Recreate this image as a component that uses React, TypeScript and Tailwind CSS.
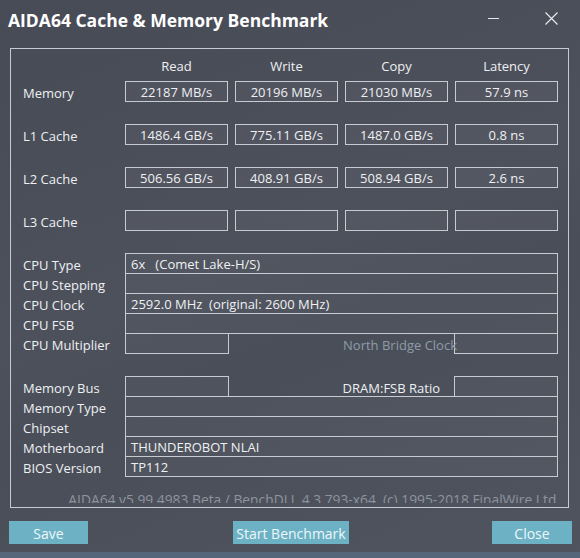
import React from 'react';

const benchRows = [
  {label: 'Memory', values: ['22187 MB/s', '20196 MB/s', '21030 MB/s', '57.9 ns']},
  {label: 'L1 Cache', values: ['1486.4 GB/s', '775.11 GB/s', '1487.0 GB/s', '0.8 ns']},
  {label: 'L2 Cache', values: ['506.56 GB/s', '408.91 GB/s', '508.94 GB/s', '2.6 ns']},
  {label: 'L3 Cache', values: ['', '', '', '']},
];

const headers = ['Read', 'Write', 'Copy', 'Latency'];

function Label({children}: {children: React.ReactNode}) {
  return <div className="h-[20px] pt-[2px] leading-[20px] whitespace-nowrap">{children}</div>;
}

function FullRow({value, last}: {value?: string; last?: boolean}) {
  return (
    <div
      className={`border-x border-t border-[#c6cad1] bg-white/[0.03] pl-[5px] pt-[1px] leading-[19px] whitespace-pre ${
        last ? 'h-[21px] border-b' : 'h-[20px]'
      }`}
    >
      {value}
    </div>
  );
}

function Button({children, className}: {children: React.ReactNode; className: string}) {
  return (
    <div className={`h-[23px] bg-[#6cb2c4] text-center text-[#eef7fa] ${className}`}>
      <div className="h-[18px] overflow-hidden pt-[3px] text-[14px] leading-[20px]">{children}</div>
    </div>
  );
}

export default function App() {
  return (
    <div className="relative flex h-[558px] w-[580px] flex-col overflow-hidden bg-[linear-gradient(160deg,#474b56_0%,#4d515c_45%,#4a4e59_60%,#50545f_100%)] font-['Segoe_UI','Open_Sans',sans-serif] text-[13px] text-[#eef0f2]">
      {/* title bar */}
      <div className="relative flex h-[48px] items-start">
        <div className="pl-[8px] pt-[7px] text-[17.5px] font-bold leading-[26px] text-white">
          AIDA64 Cache &amp; Memory Benchmark
        </div>
        <div className="absolute left-[488px] top-[18px] h-px w-[11px] bg-[#e6e8ec]" />
        <svg className="absolute left-[545px] top-[12px]" width="13" height="13" viewBox="0 0 13 13">
          <path d="M0.5 0.5L12.5 12.5M12.5 0.5L0.5 12.5" stroke="#eceef1" strokeWidth="1.1" />
        </svg>
      </div>

      {/* main panel */}
      <div className="ml-[10px] flex h-[460px] w-[559px] flex-col border border-[#c6cad1] pl-[12px]">
        {/* header */}
        <div className="mt-[7px] flex h-[20px] leading-[20px]">
          <div className="w-[102px]" />
          <div className="flex gap-[7px]">
            {headers.map((h) => (
              <div key={h} className="w-[103px] text-center">
                {h}
              </div>
            ))}
          </div>
        </div>

        {benchRows.map((row, i) => (
          <div key={row.label} className={`flex h-[21px] ${i === 0 ? 'mt-[5px]' : 'mt-[22px]'}`}>
            <div className="h-[21px] w-[102px] pt-[2px] leading-[20px]">{row.label}</div>
            <div className="flex gap-[7px]">
              {row.values.map((v, j) => (
                <div
                  key={j}
                  className="h-[21px] w-[103px] overflow-hidden border border-[#c6cad1] bg-white/[0.04] pt-[1px] text-center leading-[19px]"
                >
                  {v}
                </div>
              ))}
            </div>
          </div>
        ))}

        {/* cpu section */}
        <div className="mt-[22px] flex">
          <div className="w-[102px]">
            <Label>CPU Type</Label>
            <Label>CPU Stepping</Label>
            <Label>CPU Clock</Label>
            <Label>CPU FSB</Label>
            <Label>CPU Multiplier</Label>
          </div>
          <div className="w-[433px]">
            <FullRow value="6x   (Comet Lake-H/S)" />
            <FullRow />
            <FullRow value="2592.0 MHz  (original: 2600 MHz)" />
            <FullRow last />
            <div className="flex h-[20px]">
              <div className="w-[104px] border-x border-b border-[#c6cad1] bg-white/[0.03]" />
              <div className="relative z-10 -mr-[3px] flex-1 pt-[1px] text-right leading-[20px] text-[#8d9ca7]">
                North Bridge Clock
              </div>
              <div className="w-[104px] border-x border-b border-[#c6cad1] bg-white/[0.03]" />
            </div>
          </div>
        </div>

        {/* memory section */}
        <div className="mt-[22px] flex">
          <div className="w-[102px]">
            <Label>Memory Bus</Label>
            <Label>Memory Type</Label>
            <Label>Chipset</Label>
            <Label>Motherboard</Label>
            <Label>BIOS Version</Label>
          </div>
          <div className="w-[433px]">
            <div className="flex h-[20px]">
              <div className="w-[104px] border-x border-t border-[#c6cad1] bg-white/[0.03]" />
              <div className="flex-1 pr-[14px] pt-[2px] text-right leading-[20px]">DRAM:FSB Ratio</div>
              <div className="w-[104px] border-x border-t border-[#c6cad1] bg-white/[0.03]" />
            </div>
            <FullRow />
            <FullRow />
            <FullRow value="THUNDEROBOT NLAI" />
            <FullRow value="TP112" last />
          </div>
        </div>

        {/* footer */}
        <div className="mt-[5px] h-[21px] overflow-hidden pr-[8px] text-right">
          <div className="whitespace-pre pt-[8px] text-[13.8px] leading-[20px] text-[#8c949e]">
            AIDA64 v5.99.4983 Beta / BenchDLL 4.3.793-x64  (c) 1995-2018 FinalWire Ltd.
          </div>
        </div>
      </div>

      {/* buttons */}
      <div className="mt-[13px] flex pl-[9px]">
        <Button className="w-[79px]">Save</Button>
        <Button className="ml-[145px] w-[116px]">Start Benchmark</Button>
        <Button className="ml-[143px] w-[80px]">Close</Button>
      </div>

      <div className="mt-auto h-[6px] bg-[#55667a]" />
    </div>
  );
}
